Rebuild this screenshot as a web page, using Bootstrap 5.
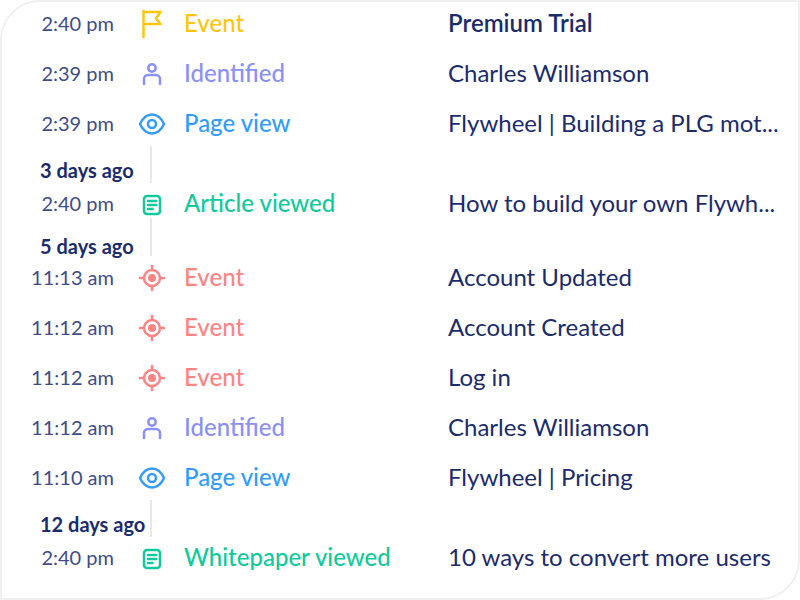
<!DOCTYPE html>
<html lang="en">
<head>
    <meta charset="UTF-8">
    <meta name="viewport" content="width=device-width, initial-scale=1.0">
    <title>Activity timeline</title>
    <link href="https://cdn.jsdelivr.net/npm/bootstrap@5.3.0/dist/css/bootstrap.min.css" rel="stylesheet">
    <style>
        html, body { height: 100%; }
        body { background: #fff; font-family: Lato, "Liberation Sans", sans-serif; overflow: hidden; }
        .tl-frame { width: 800px; height: 600px; border: 2px solid #f0f0f0; border-radius: 40px 0 40px 0; overflow: hidden; padding-top: 8px; }
        .tl-row { height: 28px; }
        .tl-row + .tl-row { margin-top: 22px; }
        .tl-time { width: 112px; font-size: 20px; color: #414c86; text-align: right; flex: none; margin-bottom: 2px; }
        .tl-icon { width: 30px; height: 30px; margin: 0 17px 0 23px; flex: none; fill: none; stroke: currentColor; stroke-width: 2.5; stroke-linecap: round; stroke-linejoin: round; }
        .tl-kind { width: 264px; font-size: 24px; font-weight: 500; flex: none; margin-bottom: 2px; }
        .tl-title { width: 340px; font-size: 24px; color: #1c2b6b; flex: none; white-space: nowrap; margin-bottom: 2px; }
        .tl-title.strong { font-weight: 600; }
        .k-flag { color: #ffc60b; }
        .k-user { color: #8b90f7; }
        .k-view { color: #359cff; }
        .k-doc { color: #12c99b; }
        .k-event { color: #ff8585; }
        .tl-gap { margin-left: 38px; position: relative; color: #1c2b6b; font-weight: 700; font-size: 20px; line-height: 24px; }
        .tl-gap::after { content: ""; position: absolute; left: 110px; width: 2px; background: #e8e8e8; }
        .gap-a { height: 52px; padding-top: 20px; }
        .gap-a::after { top: 8px; height: 37px; }
        .gap-b { height: 46px; padding-top: 16px; }
        .gap-b::after { top: 0; height: 38px; }
    </style>
</head>
<body>
    <div class="tl-frame">
        <div class="d-flex align-items-center tl-row"><span class="tl-time">2:40 pm</span>
            <svg class="tl-icon k-flag" viewBox="0 0 30 30"><path d="M6.500 2v26M6.500 3h17l-4.500 6.500 4.500 5.500H6.500"/></svg>
            <span class="tl-kind k-flag">Event</span><span class="tl-title strong">Premium Trial</span></div>
        <div class="d-flex align-items-center tl-row"><span class="tl-time">2:39 pm</span>
            <svg class="tl-icon k-user" viewBox="0 0 30 30"><circle cx="15" cy="9" r="3.700"/><path d="M7 25v-5a4 4 0 0 1 4-4h8a4 4 0 0 1 4 4v5"/></svg>
            <span class="tl-kind k-user">Identified</span><span class="tl-title">Charles Williamson</span></div>
        <div class="d-flex align-items-center tl-row"><span class="tl-time">2:39 pm</span>
            <svg class="tl-icon k-view" viewBox="0 0 30 30"><path d="M3 15C6 8.500 10 5.500 15 5.500S24 8.500 27 15C24 21.500 20 24.500 15 24.500S6 21.500 3 15Z"/><circle cx="15" cy="15" r="4"/></svg>
            <span class="tl-kind k-view">Page view</span><span class="tl-title">Flywheel | Building a PLG mot...</span></div>
        <div class="tl-gap gap-a">3 days ago</div>
        <div class="d-flex align-items-center tl-row"><span class="tl-time">2:40 pm</span>
            <svg class="tl-icon k-doc" viewBox="0 0 30 30"><rect x="7" y="7" width="16" height="18" rx="3"/><path d="M11 12h8M11 16h8M11 20h4.500"/></svg>
            <span class="tl-kind k-doc">Article viewed</span><span class="tl-title">How to build your own Flywh...</span></div>
        <div class="tl-gap gap-b">5 days ago</div>
        <div class="d-flex align-items-center tl-row"><span class="tl-time">11:13 am</span>
            <svg class="tl-icon k-event" viewBox="0 0 30 30"><circle cx="15" cy="15" r="8"/><circle cx="15" cy="15" r="4" fill="currentColor" stroke="none"/><path d="M15 3v4M15 23v4M3 15h4M23 15h4"/></svg>
            <span class="tl-kind k-event">Event</span><span class="tl-title">Account Updated</span></div>
        <div class="d-flex align-items-center tl-row"><span class="tl-time">11:12 am</span>
            <svg class="tl-icon k-event" viewBox="0 0 30 30"><circle cx="15" cy="15" r="8"/><circle cx="15" cy="15" r="4" fill="currentColor" stroke="none"/><path d="M15 3v4M15 23v4M3 15h4M23 15h4"/></svg>
            <span class="tl-kind k-event">Event</span><span class="tl-title">Account Created</span></div>
        <div class="d-flex align-items-center tl-row"><span class="tl-time">11:12 am</span>
            <svg class="tl-icon k-event" viewBox="0 0 30 30"><circle cx="15" cy="15" r="8"/><circle cx="15" cy="15" r="4" fill="currentColor" stroke="none"/><path d="M15 3v4M15 23v4M3 15h4M23 15h4"/></svg>
            <span class="tl-kind k-event">Event</span><span class="tl-title">Log in</span></div>
        <div class="d-flex align-items-center tl-row"><span class="tl-time">11:12 am</span>
            <svg class="tl-icon k-user" viewBox="0 0 30 30"><circle cx="15" cy="9" r="3.700"/><path d="M7 25v-5a4 4 0 0 1 4-4h8a4 4 0 0 1 4 4v5"/></svg>
            <span class="tl-kind k-user">Identified</span><span class="tl-title">Charles Williamson</span></div>
        <div class="d-flex align-items-center tl-row"><span class="tl-time">11:10 am</span>
            <svg class="tl-icon k-view" viewBox="0 0 30 30"><path d="M3 15C6 8.500 10 5.500 15 5.500S24 8.500 27 15C24 21.500 20 24.500 15 24.500S6 21.500 3 15Z"/><circle cx="15" cy="15" r="4"/></svg>
            <span class="tl-kind k-view">Page view</span><span class="tl-title">Flywheel | Pricing</span></div>
        <div class="tl-gap gap-a">12 days ago</div>
        <div class="d-flex align-items-center tl-row"><span class="tl-time">2:40 pm</span>
            <svg class="tl-icon k-doc" viewBox="0 0 30 30"><rect x="7" y="7" width="16" height="18" rx="3"/><path d="M11 12h8M11 16h8M11 20h4.500"/></svg>
            <span class="tl-kind k-doc">Whitepaper viewed</span><span class="tl-title">10 ways to convert more users</span></div>
    </div>
    <script src="https://cdn.jsdelivr.net/npm/bootstrap@5.3.0/dist/js/bootstrap.bundle.min.js"></script>
</body>
</html>
